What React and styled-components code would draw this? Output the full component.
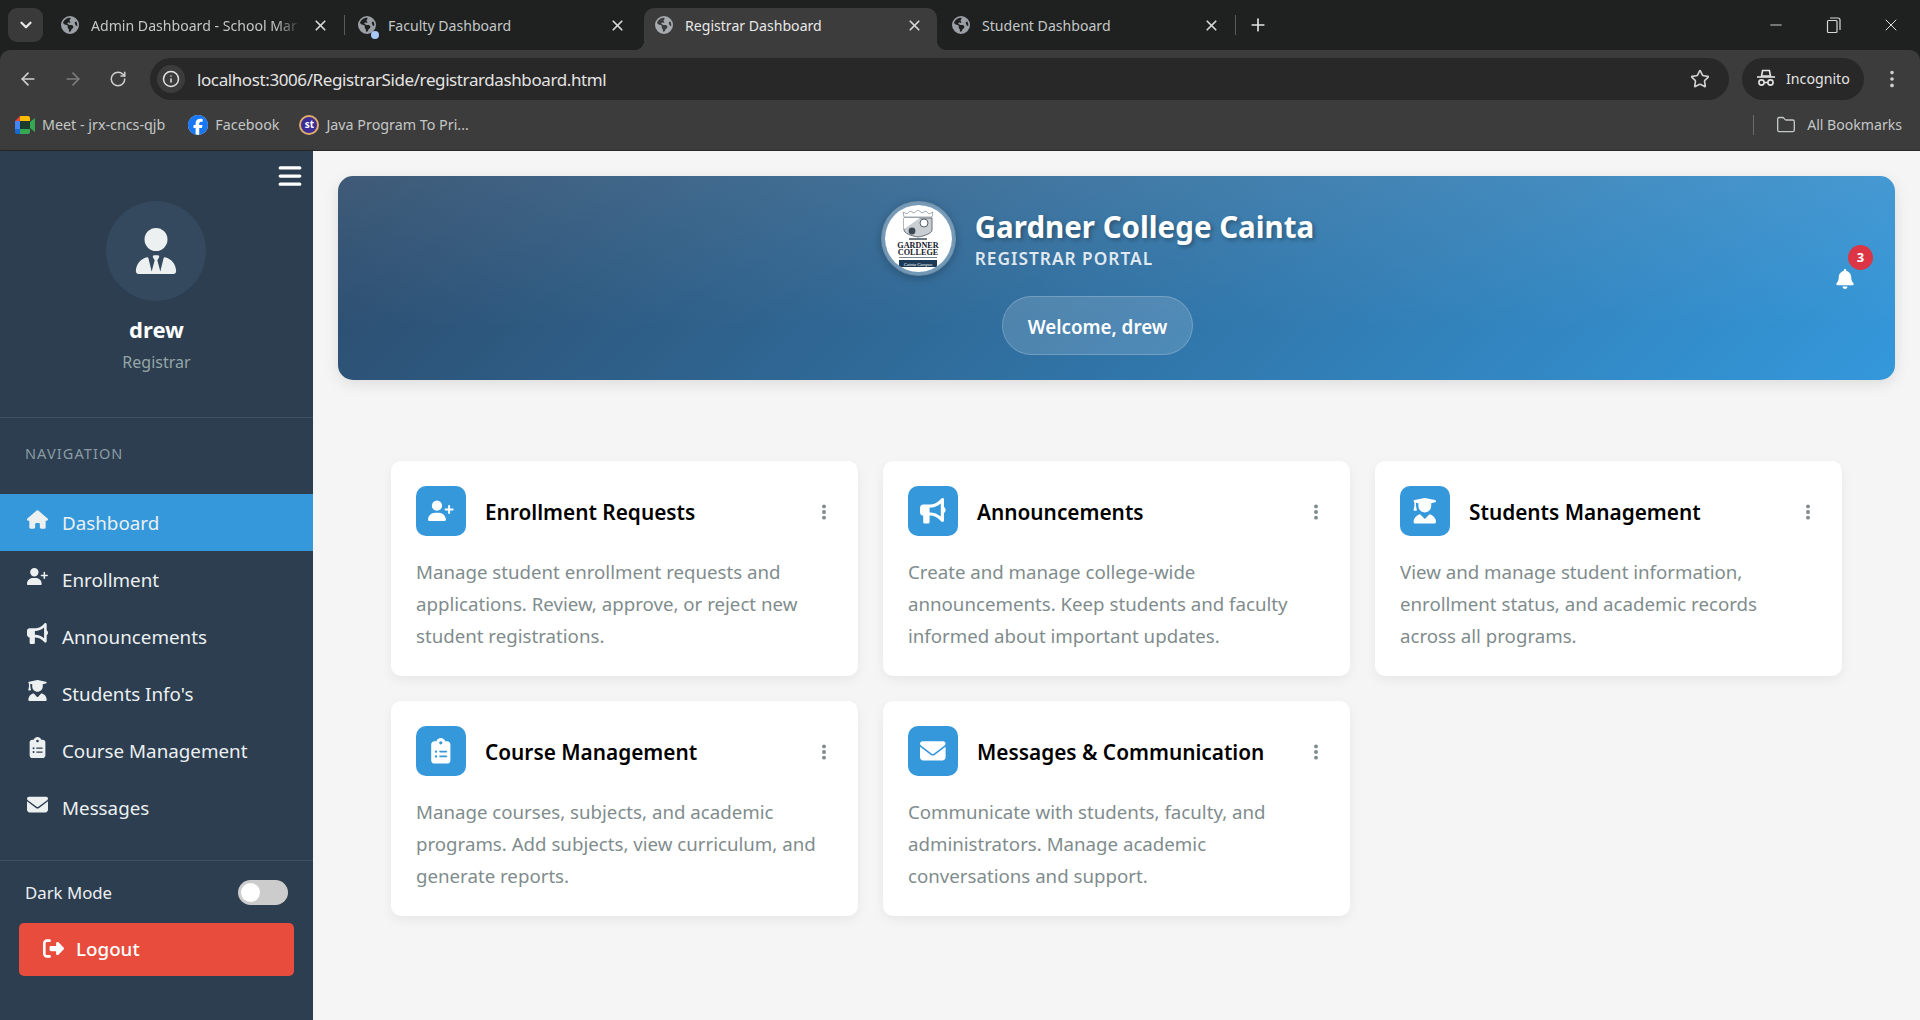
import styled, { createGlobalStyle } from "styled-components"
import { FaBars, FaBell, FaBullhorn, FaClipboardList, FaEllipsisVertical, FaEnvelope, FaFacebook, FaEarthAmericas, FaHouse, FaRightFromBracket, FaUserGraduate, FaUserPlus, FaUserTie } from "react-icons/fa6"
import { ArrowLeft, ArrowRight, ChevronDown, EllipsisVertical, Folder, Info, Minus, Plus, RotateCw, Star, X } from "lucide-react"

const FONT = `"Noto Sans", "Open Sans", "Liberation Sans", sans-serif`

const tabs = [
    { title: "Admin Dashboard - School Mar", fade: true },
    { title: "Faculty Dashboard", dot: true },
    { title: "Registrar Dashboard", active: true },
    { title: "Student Dashboard", last: true },
]

const navItems = [
    { label: "Dashboard", icon: FaHouse, active: true },
    { label: "Enrollment", icon: FaUserPlus },
    { label: "Announcements", icon: FaBullhorn },
    { label: "Students Info's", icon: FaUserGraduate },
    { label: "Course Management", icon: FaClipboardList },
    { label: "Messages", icon: FaEnvelope },
]

const cards = [
    { title: "Enrollment Requests", icon: FaUserPlus, text: ["Manage student enrollment requests and", "applications. Review, approve, or reject new", "student registrations."] },
    { title: "Announcements", icon: FaBullhorn, text: ["Create and manage college-wide", "announcements. Keep students and faculty", "informed about important updates."] },
    { title: "Students Management", icon: FaUserGraduate, text: ["View and manage student information,", "enrollment status, and academic records", "across all programs."] },
    { title: "Course Management", icon: FaClipboardList, text: ["Manage courses, subjects, and academic", "programs. Add subjects, view curriculum, and", "generate reports."] },
    { title: "Messages & Communication", icon: FaEnvelope, text: ["Communicate with students, faculty, and", "administrators. Manage academic", "conversations and support."] },
]

function MeetIcon() {
    return (
        <svg width="20" height="18" viewBox="0 0 20 18">
            <path d="M0 5 5 0v5z" fill="#ea4335" />
            <path d="M5 0h8a2 2 0 0 1 2 2v3H5z" fill="#fbbc04" />
            <path d="M0 5h5v8H0z" fill="#4285f4" />
            <path d="M0 13h5v5H2a2 2 0 0 1-2-2z" fill="#1967d2" />
            <path d="M5 13h10v3a2 2 0 0 1-2 2H5z" fill="#34a853" />
            <path d="M15 6l5-4v14l-5-4z" fill="#34a853" />
            <path d="M5 5h10v8H5z" fill="#1e3a2a" />
        </svg>
    )
}

function IncognitoIcon() {
    return (
        <svg width="20" height="20" viewBox="0 0 20 20" fill="none" stroke="#e3e3e3" strokeWidth="1.6">
            <path d="M5.5 8 6.6 2.5h6.8L14.5 8z" />
            <path d="M1 9h18" />
            <circle cx="5.5" cy="14.5" r="2.6" />
            <circle cx="14.5" cy="14.5" r="2.6" />
            <path d="M8.1 14.5h3.8" />
        </svg>
    )
}

function RestoreIcon() {
    return (
        <svg width="16" height="18" viewBox="0 0 16 18" fill="none" stroke="#d8d8d8" strokeWidth="1.2">
            <rect x="1.5" y="4.5" width="9.5" height="12" rx="1" />
            <path d="M4 2h8a2 2 0 0 1 2 2v10" />
        </svg>
    )
}

// logo crest, the small lettering stays real text
function CollegeLogo() {
    return (
        <svg width="44" height="58" viewBox="0 0 44 58">
            <path d="M8 7 7 2l4 2 3-3 4 2 4-3 4 3 4-2 3 3 4-2-1 5z" fill="#fff" stroke="#8f979e" strokeWidth="0.8" />
            <path d="M8 8h28v12c0 3-7 6-14 7-7-1-14-4-14-7z" fill="#c9ced2" stroke="#59636c" strokeWidth="0.9" />
            <path d="M8 8h16L8 19z" fill="#fff" />
            <circle cx="28" cy="13" r="4" fill="#fff" stroke="#55606b" strokeWidth="1" />
            <circle cx="16" cy="21" r="3.4" fill="#3d4852" />
            <path d="M13 28h18v2H13z" fill="#6f7982" />
            <text x="22" y="38" textAnchor="middle" fontFamily="'Liberation Serif', serif" fontWeight="700" fontSize="8.2" fill="#14202b">GARDNER</text>
            <text x="22" y="45" textAnchor="middle" fontFamily="'Liberation Serif', serif" fontWeight="700" fontSize="8.2" fill="#14202b">COLLEGE</text>
            <path d="M3 47h38v1H3z" fill="#7a838b" />
            <rect x="3" y="50" width="38" height="7" fill="#1b3a57" />
            <text x="22" y="55.5" textAnchor="middle" fontFamily="'Liberation Serif', serif" fontStyle="italic" fontSize="4.6" fill="#fff">Cainta Campus</text>
        </svg>
    )
}

export default function App() {
    return (
        <>
            <GlobalStyle />
            <Page>
                <TabStrip>
                    <TabSearch><ChevronDown size={18} strokeWidth={3} /></TabSearch>
                    {tabs.map((t) => (
                        <Tab key={t.title} $active={t.active} $sep={!t.active && !t.dot}>
                            <Favicon $active={t.active}>
                                <FaEarthAmericas size={18} />
                                {t.dot && <TabDot />}
                            </Favicon>
                            <TabTitle $active={t.active} $fade={t.fade}>{t.title}</TabTitle>
                            <TabClose><X size={17} strokeWidth={2.4} /></TabClose>
                        </Tab>
                    ))}
                    <NewTab><Plus size={20} strokeWidth={2} /></NewTab>
                    <WindowControls>
                        <WindowButton><Minus size={18} strokeWidth={1.2} /></WindowButton>
                        <WindowButton><RestoreIcon /></WindowButton>
                        <WindowButton><X size={20} strokeWidth={1.2} /></WindowButton>
                    </WindowControls>
                </TabStrip>

                <Toolbar>
                    <ToolButton><ArrowLeft size={20} /></ToolButton>
                    <ToolButton $dim><ArrowRight size={20} /></ToolButton>
                    <ToolButton><RotateCw size={18} /></ToolButton>
                    <AddressBar>
                        <InfoChip><Info size={18} /></InfoChip>
                        <Url>localhost:3006/RegistrarSide/registrardashboard.html</Url>
                        <Star size={20} color="#d0d0d0" />
                    </AddressBar>
                    <IncognitoPill><IncognitoIcon />Incognito</IncognitoPill>
                    <MenuButton><EllipsisVertical size={22} /></MenuButton>
                </Toolbar>

                <Bookmarks>
                    <Bookmark><MeetIcon />Meet - jrx-cncs-qjb</Bookmark>
                    <Bookmark>
                        <FacebookMark><FaFacebook size={20} /></FacebookMark>
                        Facebook
                    </Bookmark>
                    <Bookmark><StudyBadge>st</StudyBadge>Java Program To Pri...</Bookmark>
                    <AllBookmarks>
                        <Folder size={20} strokeWidth={1.6} />
                        All Bookmarks
                    </AllBookmarks>
                </Bookmarks>

                <Body>
                    <Sidebar>
                        <SidebarTop><FaBars size={26} color="#fff" /></SidebarTop>
                        <Profile>
                            <Avatar><FaUserTie size={46} /></Avatar>
                            <ProfileName>drew</ProfileName>
                            <ProfileRole>Registrar</ProfileRole>
                        </Profile>
                        <NavLabel>NAVIGATION</NavLabel>
                        <nav>
                            {navItems.map((item) => (
                                <NavItem key={item.label} $active={item.active}>
                                    <NavIcon><item.icon size={21} /></NavIcon>
                                    {item.label}
                                </NavItem>
                            ))}
                        </nav>
                        <SidebarFooter>
                            <DarkModeRow>
                                Dark Mode
                                <Toggle><Knob /></Toggle>
                            </DarkModeRow>
                            <LogoutButton><FaRightFromBracket size={21} />Logout</LogoutButton>
                        </SidebarFooter>
                    </Sidebar>

                    <Main>
                        <Banner>
                            <BannerCenter>
                                <BrandRow>
                                    <LogoCircle><CollegeLogo /></LogoCircle>
                                    <div>
                                        <BrandTitle>Gardner College Cainta</BrandTitle>
                                        <BrandSub>REGISTRAR PORTAL</BrandSub>
                                    </div>
                                </BrandRow>
                                <WelcomePill>Welcome, drew</WelcomePill>
                            </BannerCenter>
                            <BellBox>
                                <FaBell size={20} color="#fff" />
                                <BellBadge>3</BellBadge>
                            </BellBox>
                        </Banner>

                        <CardGrid>
                            {cards.map((c) => (
                                <Card key={c.title}>
                                    <CardHead>
                                        <CardIcon><c.icon size={25.6} /></CardIcon>
                                        <CardTitle>{c.title}</CardTitle>
                                        <CardMenu><FaEllipsisVertical size={18} /></CardMenu>
                                    </CardHead>
                                    <CardText>
                                        {c.text.map((line) => <span key={line}>{line}</span>)}
                                    </CardText>
                                </Card>
                            ))}
                        </CardGrid>
                    </Main>
                </Body>
            </Page>
        </>
    )
}

const GlobalStyle = createGlobalStyle`
    * { box-sizing: border-box; }
    html, body { margin: 0; padding: 0; height: 100%; overflow: hidden; }
    body { font-family: ${FONT}; background: #f5f5f5; }
`

const Page = styled.div`
    display: flex;
    flex-direction: column;
    width: 1920px;
    height: 1020px;
    overflow: hidden;
    background: #1f2121;
`

const TabStrip = styled.div`
    display: flex;
    align-items: flex-start;
    height: 50px;
    padding: 8px 0 0 8px;
    background: #1f2121;
    position: relative;
    z-index: 1;
`

const TabSearch = styled.div`
    width: 35px;
    height: 34px;
    margin-right: 5px;
    border-radius: 9px;
    background: #3a3a3a;
    color: #e8e8e8;
    display: flex;
    align-items: center;
    justify-content: center;
`

const Tab = styled.div`
    position: relative;
    width: 297px;
    height: 42px;
    display: flex;
    align-items: center;
    padding: 0 12px 8px 13px;
    margin-top: 0;

    ${(p) => p.$active && `
        background: #3c3c3c;
        border-radius: 10px 10px 0 0;
        margin: 0 2px;
        width: 293px;
        padding: 0 10px 8px 11px;
        &::before, &::after {
            content: "";
            position: absolute;
            bottom: 0;
            width: 10px;
            height: 10px;
        }
        &::before { left: -10px; background: radial-gradient(circle at 0 0, #1f2121 10px, #3c3c3c 10.5px); }
        &::after { right: -10px; background: radial-gradient(circle at 100% 0, #1f2121 10px, #3c3c3c 10.5px); }
    `}

    ${(p) => p.$sep && `
        &::after {
            content: "";
            position: absolute;
            right: 0;
            top: 7px;
            height: 20px;
            width: 1px;
            background: #5a5a5a;
        }
    `}
`

const Favicon = styled.span`
    position: relative;
    display: flex;
    width: 18px;
    margin-right: 12px;
    color: ${(p) => (p.$active ? "#a6abb0" : "#9aa0a6")};
`

const TabDot = styled.span`
    position: absolute;
    right: -3px;
    bottom: -5px;
    width: 8px;
    height: 8px;
    border-radius: 50%;
    background: #a8c7fa;
`

const TabTitle = styled.span`
    flex: 1;
    font-size: 14.1px;
    color: ${(p) => (p.$active ? "#e8e8e8" : "#c4c7c7")};
    white-space: nowrap;
    ${(p) => p.$fade && `
        -webkit-mask-image: linear-gradient(90deg, #000 185px, transparent 210px);
        mask-image: linear-gradient(90deg, #000 185px, transparent 210px);
    `}
`

const TabClose = styled.span`
    display: flex;
    color: #d6d6d6;
    margin-left: 8px;
    margin-right: 4px;
`

const NewTab = styled.div`
    width: 44px;
    height: 34px;
    display: flex;
    align-items: center;
    justify-content: center;
    color: #e3e3e3;
`

const WindowControls = styled.div`
    margin-left: auto;
    display: flex;
    height: 34px;
    padding-right: 0;
`

const WindowButton = styled.div`
    width: 57.5px;
    display: flex;
    align-items: center;
    justify-content: center;
    color: #e0e0e0;
`

const Toolbar = styled.div`
    height: 50px;
    display: flex;
    align-items: flex-start;
    padding: 8px 0 0 5px;
    background: #3c3c3c;
    border-radius: 10px 10px 0 0;
    position: relative;
    z-index: 2;
`

const ToolButton = styled.div`
    width: 45px;
    height: 42px;
    display: flex;
    align-items: center;
    justify-content: center;
    color: ${(p) => (p.$dim ? "#7c7c7c" : "#cfcfcf")};
`

const AddressBar = styled.div`
    flex: 1;
    height: 42px;
    margin-left: 10px;
    padding: 0 19px 0 7px;
    border-radius: 21px;
    background: #282828;
    display: flex;
    align-items: center;
`

const InfoChip = styled.div`
    width: 28px;
    height: 28px;
    border-radius: 50%;
    background: #3c3c3c;
    color: #e3e3e3;
    display: flex;
    align-items: center;
    justify-content: center;
    margin-right: 12px;
`

const Url = styled.div`
    flex: 1;
    font-size: 17px;
    color: #e3e3e3;
    letter-spacing: -0.4px;
`

const IncognitoPill = styled.div`
    width: 122px;
    height: 42px;
    margin-left: 13px;
    border-radius: 21px;
    background: #282828;
    color: #e3e3e3;
    font-size: 14.2px;
    display: flex;
    align-items: center;
    gap: 10px;
    padding: 0 0 2px 14px;
`

const MenuButton = styled.div`
    width: 56px;
    height: 42px;
    display: flex;
    align-items: center;
    justify-content: center;
    color: #d0d0d0;
`

const Bookmarks = styled.div`
    height: 51px;
    padding: 0 18px 1px 15px;
    display: flex;
    align-items: center;
    gap: 21px;
    background: #3c3c3c;
    border-bottom: 1px solid #2a2a2a;
    color: #c4c7c7;
    font-size: 14.3px;
`

const Bookmark = styled.div`
    display: flex;
    align-items: center;
    gap: 7px;
`

const FacebookMark = styled.span`
    display: flex;
    border-radius: 50%;
    background: #fff;
    color: #1877f2;
    margin-left: 2px;
`

const StudyBadge = styled.span`
    width: 20px;
    height: 20px;
    margin-left: -1px;
    border-radius: 50%;
    background: #3b2c96;
    border: 2px solid #e0ac6b;
    color: #fff;
    font-size: 10px;
    font-weight: 700;
    line-height: 14px;
    text-align: center;
`

const AllBookmarks = styled.div`
    margin-left: auto;
    display: flex;
    align-items: center;
    gap: 11px;
    padding-left: 22px;
    border-left: 1px solid #6a6a6a;
    height: 20px;
    font-size: 14.1px;
`

const Body = styled.div`
    flex: 1;
    display: flex;
    min-height: 0;
    background: #f5f5f5;
`

const Sidebar = styled.aside`
    width: 313px;
    flex-shrink: 0;
    background: #2c3e50;
    color: #ecf0f1;
    display: flex;
    flex-direction: column;
    box-shadow: 2px 0 8px rgba(0, 0, 0, 0.08);
`

const SidebarTop = styled.div`
    height: 50px;
    padding: 12px 10px 0 0;
    display: flex;
    justify-content: flex-end;
`

const Profile = styled.div`
    height: 217px;
    display: flex;
    flex-direction: column;
    align-items: center;
    border-bottom: 1px solid rgba(255, 255, 255, 0.1);
`

const Avatar = styled.div`
    width: 100px;
    height: 100px;
    margin-right: 2px;
    border-radius: 50%;
    background: #34495e;
    color: #ecf0f1;
    display: flex;
    align-items: center;
    justify-content: center;
`

const ProfileName = styled.div`
    margin-top: 13px;
    font-size: 22px;
    font-weight: 700;
    line-height: 30px;
    color: #fff;
`

const ProfileRole = styled.div`
    margin-top: 7px;
    font-size: 16px;
    line-height: 22px;
    color: #95a5a6;
`

const NavLabel = styled.div`
    height: 76px;
    padding: 25px 0 0 25px;
    font-size: 14.5px;
    line-height: 20px;
    letter-spacing: 1.1px;
    color: #8b9ba3;
`

const NavItem = styled.div`
    height: 57px;
    padding-left: 25px;
    display: flex;
    align-items: center;
    gap: 12px;
    font-size: 18.8px;
    color: #ecf0f1;
    background: ${(p) => (p.$active ? "#3498db" : "transparent")};
`

const NavIcon = styled.span`
    width: 25px;
    display: flex;
    justify-content: center;
    margin-bottom: 6px;
`

const SidebarFooter = styled.div`
    margin-top: 24px;
    border-top: 1px solid rgba(255, 255, 255, 0.1);
    padding: 0 19px;
`

const DarkModeRow = styled.div`
    height: 62px;
    padding: 1px 6px 0 6px;
    display: flex;
    align-items: center;
    justify-content: space-between;
    font-size: 16.8px;
    color: #ecf0f1;
`

const Toggle = styled.div`
    width: 50px;
    height: 25px;
    border-radius: 13px;
    background: #ccc;
    padding: 3px;
`

const Knob = styled.div`
    width: 19px;
    height: 19px;
    border-radius: 50%;
    background: #fff;
`

const LogoutButton = styled.div`
    height: 53px;
    padding: 0 0 2px 24px;
    border-radius: 5px;
    background: #e74c3c;
    color: #fff;
    font-size: 18.8px;
    font-weight: 500;
    display: flex;
    align-items: center;
    gap: 12px;
`

const Main = styled.main`
    flex: 1;
    padding: 25px;
    min-width: 0;
    background: #f5f5f5;
`

const Banner = styled.header`
    height: 204px;
    padding: 25px 30px 25px 32px;
    border-radius: 15px;
    background:
        linear-gradient(180deg, rgba(255, 255, 255, 0.09), rgba(255, 255, 255, 0) 75%),
        linear-gradient(135deg, #2c4a6a, #3498db);
    box-shadow: 0 4px 15px rgba(0, 0, 0, 0.1);
    display: flex;
    align-items: center;
    color: #fff;
`

const BannerCenter = styled.div`
    flex: 1;
    display: flex;
    flex-direction: column;
    align-items: center;
    gap: 20px;
`

const BrandRow = styled.div`
    display: flex;
    align-items: center;
    gap: 19px;
`

const LogoCircle = styled.div`
    width: 75px;
    height: 75px;
    border-radius: 50%;
    background: #fff;
    border: 4px solid rgba(255, 255, 255, 0.3);
    background-clip: padding-box;
    box-shadow: 0 2px 8px rgba(0, 0, 0, 0.25);
    display: flex;
    align-items: center;
    justify-content: center;
    overflow: hidden;
`

const BrandTitle = styled.h1`
    margin: 0;
    padding-top: 2px;
    font-size: 29.5px;
    font-weight: 700;
    line-height: 36px;
    color: #fff;
    text-shadow: 2px 2px 4px rgba(0, 0, 0, 0.3);
`

const BrandSub = styled.div`
    margin-top: 2px;
    font-size: 17.3px;
    font-weight: 600;
    line-height: 24px;
    letter-spacing: 1px;
    color: rgba(255, 255, 255, 0.85);
`

const WelcomePill = styled.div`
    width: 191px;
    height: 59px;
    padding-top: 2px;
    border-radius: 30px;
    border: 1px solid rgba(255, 255, 255, 0.2);
    background: rgba(255, 255, 255, 0.15);
    display: flex;
    align-items: center;
    justify-content: center;
    font-size: 18.8px;
    font-weight: 600;
`

const BellBox = styled.div`
    position: relative;
    width: 40px;
    height: 40px;
    display: flex;
    align-items: center;
    justify-content: center;
    margin-top: 1px;
`

const BellBadge = styled.span`
    position: absolute;
    top: -14px;
    right: -8px;
    width: 25px;
    height: 25px;
    border-radius: 50%;
    background: #dc3545;
    color: #fff;
    font-size: 13px;
    font-weight: 700;
    display: flex;
    align-items: center;
    justify-content: center;
`

const CardGrid = styled.section`
    margin-top: 81px;
    padding: 0 53px;
    display: grid;
    grid-template-columns: repeat(3, 1fr);
    gap: 25px;
`

const Card = styled.article`
    height: 215px;
    padding: 25px;
    border-radius: 10px;
    background: #fff;
    box-shadow: 0 4px 12px rgba(0, 0, 0, 0.06);
`

const CardHead = styled.div`
    display: flex;
    align-items: center;
    gap: 19px;
    margin-bottom: 20px;
`

const CardIcon = styled.div`
    width: 50px;
    height: 50px;
    flex-shrink: 0;
    border-radius: 10px;
    background: #3498db;
    color: #fff;
    display: flex;
    align-items: center;
    justify-content: center;
`

const CardTitle = styled.h3`
    flex: 1;
    margin: 0;
    padding-top: 2px;
    font-size: 20.8px;
    font-weight: 600;
    color: #000;
`

const CardMenu = styled.div`
    width: 18px;
    padding-top: 1px;
    display: flex;
    justify-content: center;
    color: #7f8c8d;
`

const CardText = styled.p`
    margin: 0;
    font-size: 18.68px;
    line-height: 32px;
    color: #7f8c8d;

    span { display: block; white-space: nowrap; }
`
